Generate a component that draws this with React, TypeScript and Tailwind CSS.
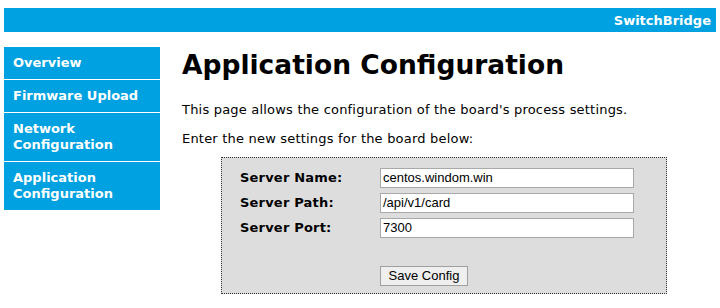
import React from "react";

const verdana = { fontFamily: '"DejaVu Sans", Verdana, sans-serif' };
const arial = { fontFamily: '"Liberation Sans", Arial, sans-serif' };

export default function App() {
  const nav = [
    ["Overview"],
    ["Firmware Upload"],
    ["Network", "Configuration"],
    ["Application", "Configuration"],
  ];
  const rows = [
    ["Server Name:", "centos.windom.win"],
    ["Server Path:", "/api/v1/card"],
    ["Server Port:", "7300"],
  ];
  return (
    <div className="w-[720px] h-[308px] bg-white overflow-hidden" style={verdana}>
      <div className="mx-[4px] mt-[8px] h-[24px] bg-[#00a1e0] flex items-center justify-end pr-[5px]">
        <span className="text-white font-bold text-[13px] leading-none">SwitchBridge</span>
      </div>
      <div className="flex mt-[15px]">
        <div className="ml-[4px] w-[156px] flex flex-col gap-[1px] shrink-0">
          {nav.map((lines, i) => (
            <div key={i} className="bg-[#00a1e0] text-white font-bold text-[13px] leading-[16px] px-[9px] py-[8px]">
              {lines.map((l, j) => (
                <div key={j}>{l}</div>
              ))}
            </div>
          ))}
        </div>
        <div className="ml-[22px] flex-1">
          <h1 className="text-[26.5px] font-bold leading-[34px] text-black mt-[1px]">Application Configuration</h1>
          <p className="text-[13px] leading-[16px] tracking-[0.2px] text-black mt-[20px]">This page allows the configuration of the board's process settings.</p>
          <p className="text-[13px] leading-[16px] tracking-[0.2px] text-black mt-[13px]">Enter the new settings for the board below:</p>
          <div className="ml-[39px] mt-[10px] w-[446px] h-[137px] bg-[#dddddd] border border-dotted border-[#333] pt-[10px] pl-[18px]">
            <div className="flex flex-col gap-[5px]">
              {rows.map(([label, value], i) => (
                <div key={i} className="flex items-center h-[20px]">
                  <div className="w-[140px] font-bold text-[13px] tracking-[0.2px] text-black">{label}</div>
                  <div className="w-[254px] h-[20px] bg-white border border-[#a9a9a9] px-[2px] flex items-center text-[13px] text-black" style={arial}>
                    {value}
                  </div>
                </div>
              ))}
            </div>
            <div className="ml-[140px] mt-[25px]">
              <button className="w-[88px] h-[20px] bg-[#efefef] border border-[#a0a0a0] text-[13px] text-black leading-none" style={arial}>
                Save Config
              </button>
            </div>
          </div>
        </div>
      </div>
    </div>
  );
}
